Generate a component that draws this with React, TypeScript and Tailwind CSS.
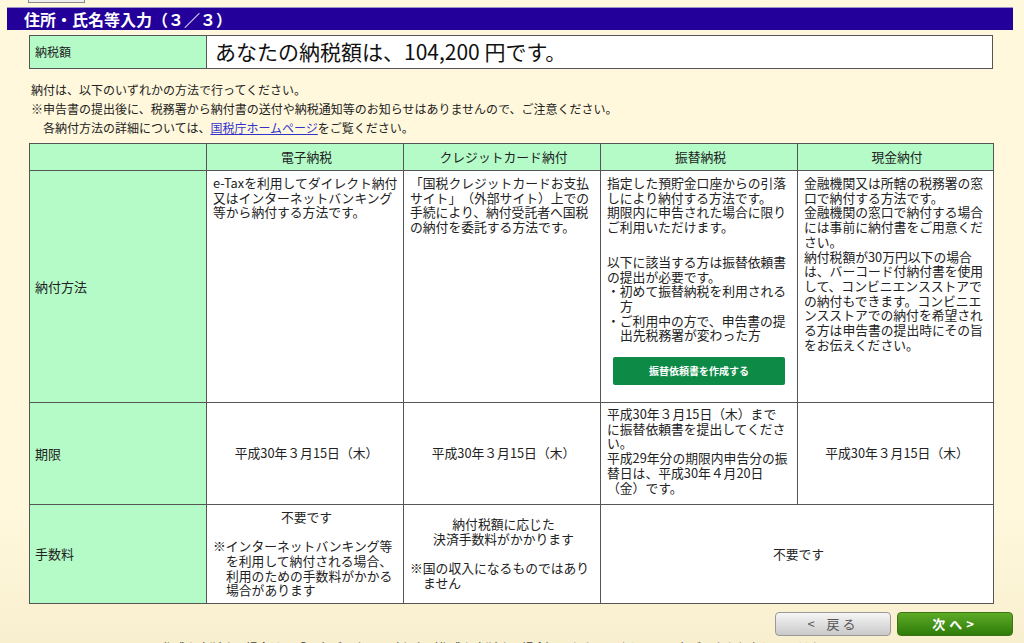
const cell = "border border-[#555] pl-[6px] pr-[3px] text-[12.8px] leading-[14.7px] text-[#222]";
const label = "border border-[#555] bg-[#b4fbc8] px-[5px] align-middle text-[13px] text-[#222]";

function Note({ children }: { children: React.ReactNode }) {
  return <div className="pl-[13px] -indent-[13px] text-left">{children}</div>;
}

export default function App() {
  return (
    <div className="h-[643px] w-[1024px] overflow-hidden bg-gradient-to-b from-[#fff8dc] from-80% to-[#f8efcf] font-['Noto_Sans_CJK_JP',sans-serif] [text-spacing-trim:space-all]">
      <div className="ml-[28px] h-[3px] w-[57px] border-x border-b border-[#888] bg-[#eee]" />

      <div className="mr-[11px] ml-[7px] mt-[4px] flex h-[23px] items-center border-t border-[#9b93c9] bg-[#220099] pl-[17px] text-[16px] font-bold text-white">
        住所・氏名等入力（３／３）
      </div>

      <div className="ml-[29px] mt-[5px] flex h-[34px] w-[964px] border border-[#555]">
        <div className="flex w-[177px] items-center border-r border-[#555] bg-[#b4fbc8] pl-[5px] text-[12px] text-[#222]">
          納税額
        </div>
        <div className="flex flex-1 items-center bg-white pl-[8px] text-[21px] text-[#111]">
          あなたの納税額は、104,200 円です。
        </div>
      </div>

      <div className="ml-[31px] mt-[11px] text-[12px] leading-[19px] text-[#222]">
        <p>納付は、以下のいずれかの方法で行ってください。</p>
        <p>※申告書の提出後に、税務署から納付書の送付や納税通知等のお知らせはありませんので、ご注意ください。</p>
        <p className="pl-[12px]">
          各納付方法の詳細については、
          <a className="text-[#3333cc] underline">国税庁ホームページ</a>
          をご覧ください。
        </p>
      </div>

      <table className="ml-[29px] mt-[6px] w-[964px] table-fixed border-collapse bg-white">
        <colgroup>
          <col className="w-[177px]" />
          <col className="w-[197px]" />
          <col className="w-[197px]" />
          <col className="w-[197px]" />
          <col className="w-[196px]" />
        </colgroup>
        <tbody>
          <tr className="h-[27px] bg-[#b4fbc8] text-center">
            <td className={label}></td>
            <td className={cell + " align-middle"}>電子納税</td>
            <td className={cell + " align-middle"}>クレジットカード納付</td>
            <td className={cell + " align-middle"}>振替納税</td>
            <td className={cell + " align-middle"}>現金納付</td>
          </tr>
          <tr className="h-[232px]">
            <td className={label}>納付方法</td>
            <td className={cell + " pt-[5px] align-top"}>
              e-Taxを利用してダイレクト納付又はインターネットバンキング等から納付する方法です。
            </td>
            <td className={cell + " pt-[5px] align-top"}>
              「国税クレジットカードお支払サイト」（外部サイト）上での手続により、納付受託者へ国税の納付を委託する方法です。
            </td>
            <td className={cell + " pt-[5px] align-top"}>
              <p>指定した預貯金口座からの引落しにより納付する方法です。</p>
              <p>期限内に申告された場合に限りご利用いただけます。</p>
              <p className="mt-[20px]">以下に該当する方は振替依頼書の提出が必要です。</p>
              <Note>・初めて振替納税を利用される方</Note>
              <Note>・ご利用中の方で、申告書の提出先税務署が変わった方</Note>
              <button className="mx-[6px] mt-[14px] flex h-[28px] w-[172px] items-center justify-center rounded-[2px] bg-[#0c8a46] text-[10px] font-semibold text-white">
                振替依頼書を作成する
              </button>
            </td>
            <td className={cell + " pt-[5px] align-top"}>
              <p>金融機関又は所轄の税務署の窓口で納付する方法です。</p>
              <p>金融機関の窓口で納付する場合には事前に納付書をご用意ください。</p>
              <p>
                納付税額が30万円以下の場合は、バーコード付納付書を使用して、コンビニエンスストアでの納付もできます。コンビニエンスストアでの納付を希望される方は申告書の提出時にその旨をお伝えください。
              </p>
            </td>
          </tr>
          <tr className="h-[102px]">
            <td className={label}>期限</td>
            <td className={cell + " text-center align-middle"}>平成30年３月15日（木）</td>
            <td className={cell + " text-center align-middle"}>平成30年３月15日（木）</td>
            <td className={cell + " pt-[4px] align-top"}>
              <p>
                平成30年３月15日（木）まで
                <br />
                に振替依頼書を提出してください。
              </p>
              <p>平成29年分の期限内申告分の振替日は、平成30年４月20日（金）です。</p>
            </td>
            <td className={cell + " text-center align-middle"}>平成30年３月15日（木）</td>
          </tr>
          <tr className="h-[99px]">
            <td className={label}>手数料</td>
            <td className={cell + " text-center align-middle"}>
              <p>不要です</p>
              <div className="mt-[14.7px]">
                <Note>※インターネットバンキング等を利用して納付される場合、利用のための手数料がかかる場合があります</Note>
              </div>
            </td>
            <td className={cell + " text-center align-middle"}>
              <p>納付税額に応じた</p>
              <p>決済手数料がかかります</p>
              <div className="mt-[14.7px]">
                <Note>※国の収入になるものではありません</Note>
              </div>
            </td>
            <td colSpan={2} className={cell + " text-center align-middle"}>
              不要です
            </td>
          </tr>
        </tbody>
      </table>

      <div className="mt-[8px] flex justify-end gap-[6px] pr-[11px]">
        <button className="flex h-[24px] w-[116px] items-center justify-center gap-[12px] rounded-[4px] border border-[#999] bg-gradient-to-b from-[#f6f6f6] to-[#c9c9c9] text-[13px] text-[#555]">
          <span>&lt;</span>
          <span className="tracking-[3px]">戻る</span>
        </button>
        <button className="flex h-[24px] w-[116px] items-center justify-center rounded-[4px] border border-[#3c7414] bg-gradient-to-b from-[#5dab26] to-[#2e7c09] text-[13px] font-bold tracking-[4px] text-white">
          次へ&gt;
        </button>
      </div>

      <p className="ml-[147px] mt-[3px] text-[12px] text-[#444]">
        ※ 作成を中断する場合は、「入力データの一時保存（作成を中断する場合）」をクリックして、入力データを保存してください。
      </p>
    </div>
  );
}
